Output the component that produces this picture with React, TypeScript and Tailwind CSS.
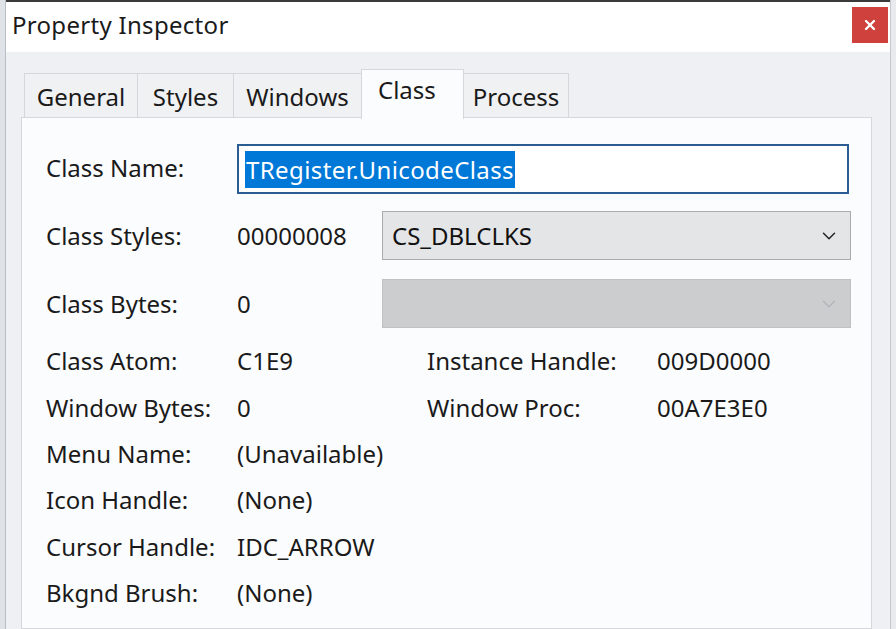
import { ChevronDown, X } from "lucide-react";

const TABS = ["General", "Styles", "Windows", "Class", "Process"];
const TAB_WIDTHS: Record<string, string> = {
  General: "w-[114px]",
  Styles: "w-[97px]",
  Windows: "w-[129px]",
  Class: "w-[103px]",
  Process: "w-[106px]",
};

const ROWS = [
  { label: "Class Atom:", value: "C1E9", label2: "Instance Handle:", value2: "009D0000" },
  { label: "Window Bytes:", value: "0", label2: "Window Proc:", value2: "00A7E3E0" },
  { label: "Menu Name:", value: "(Unavailable)" },
  { label: "Icon Handle:", value: "(None)" },
  { label: "Cursor Handle:", value: "IDC_ARROW" },
  { label: "Bkgnd Brush:", value: "(None)" },
];

function Combo({ text, disabled }: { text?: string; disabled?: boolean }) {
  return (
    <div
      className={
        disabled
          ? "flex h-[49px] w-[469px] items-center justify-between border border-[#bfc1c3] bg-[#cbcdcf] pl-[9px] pr-[10px]"
          : "flex h-[49px] w-[469px] items-center justify-between border border-[#a9abad] bg-[#e4e5e7] pl-[9px] pr-[10px]"
      }
    >
      <span className="text-[#111]">{text}</span>
      <ChevronDown
        size={22}
        strokeWidth={1.6}
        className={disabled ? "text-[#b4b6b8]" : "text-[#222]"}
      />
    </div>
  );
}

export default function App() {
  return (
    <div
      className="flex h-[629px] w-[896px] overflow-hidden bg-[#c9ced6] text-[24px] leading-[32px] text-[#1a1a1a]"
      style={{ fontFamily: '"Noto Sans", "Open Sans", sans-serif' }}
    >
      {/* window behind */}
      <div className="w-[6px] shrink-0 bg-[#dfe3e8] border-r border-[#b8bec6]" />

      <div className="flex w-[884px] shrink-0 flex-col border-t-2 border-[#3a3a3a] bg-[#eef0f3]">
        {/* title bar */}
        <div className="flex h-[50px] shrink-0 items-start justify-between bg-white pl-[6px] pr-[2px]">
          <span className="mt-[6px] leading-[34px] tracking-[0.3px] text-[#1a1a1a]">Property Inspector</span>
          <div className="mt-[5px] flex h-[36px] w-[36px] items-center justify-center bg-[#cf413d]">
            <X size={16} strokeWidth={3.5} className="text-white" />
          </div>
        </div>

        {/* body */}
        <div className="flex flex-1 flex-col pl-[15px] pr-[18px] pt-[16px]">
          <div className="flex h-[49px] items-end pl-[4px]">
            {TABS.map((t) =>
              t === "Class" ? (
                <div
                  key={t}
                  className={`relative z-10 -mb-[2px] -ml-px flex h-[50px] ${TAB_WIDTHS[t]} items-start justify-start border border-b-0 border-[#d5d7da] bg-[#fbfcfd] pl-[16px] pt-[4px] leading-[32px]`}
                >
                  {t}
                </div>
              ) : (
                <div
                  key={t}
                  className={`-ml-px flex h-[44px] ${TAB_WIDTHS[t]} items-center justify-center border border-b-0 border-[#d5d7da] bg-[#f0f1f3] pt-[2px] leading-[32px]`}
                >
                  {t}
                </div>
              ),
            )}
          </div>

          <div className="flex flex-1 flex-col border border-[#d5d7da] bg-[#fbfcfd] pl-[24px] pt-[26px]">
            <div className="flex h-[50px] items-center">
              <span className="-mt-[2px] w-[191px]">Class Name:</span>
              <div className="flex h-[50px] w-[612px] items-center border-2 border-[#2b5d92] bg-white pl-[6px]">
                <span className="bg-[#0078d7] px-px leading-[37px] tracking-[0.4px] text-white">
                  TRegister.UnicodeClass
                </span>
              </div>
            </div>

            <div className="mt-[17px] flex h-[49px] items-center">
              <span className="w-[191px]">Class Styles:</span>
              <span className="w-[145px]">00000008</span>
              <Combo text="CS_DBLCLKS" />
            </div>

            <div className="mt-[19px] flex h-[49px] items-center">
              <span className="w-[191px]">Class Bytes:</span>
              <span className="w-[145px]">0</span>
              <Combo disabled />
            </div>

            <div className="mt-[10px] flex flex-col">
              {ROWS.map((r) => (
                <div key={r.label} className="flex h-[46.4px] items-center">
                  <span className="w-[191px]">{r.label}</span>
                  <span className="w-[190px]">{r.value}</span>
                  {r.label2 && <span className="w-[230px]">{r.label2}</span>}
                  {r.value2 && <span>{r.value2}</span>}
                </div>
              ))}
            </div>
          </div>
        </div>
      </div>

      <div className="w-[6px] shrink-0 border-l border-[#c4c8ce] bg-[#e8eaee]" />
    </div>
  );
}
